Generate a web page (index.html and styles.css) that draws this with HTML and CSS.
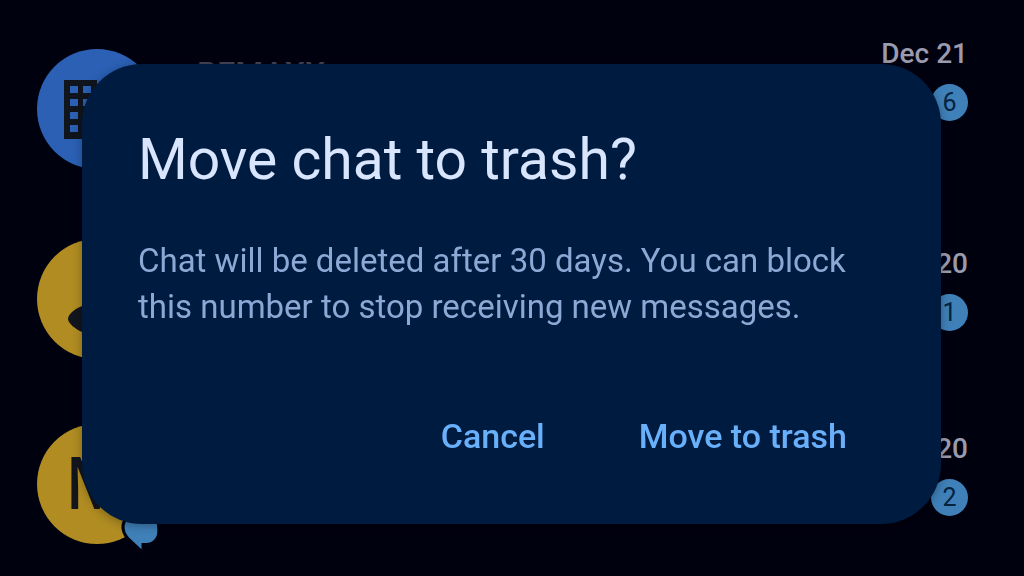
FILE: index.html
```html
<!DOCTYPE html>
<html lang="en">
<head>
  <meta charset="UTF-8" />
  <meta name="viewport" content="width=device-width, initial-scale=1.0"/>
  <title>Messages</title>
  <link rel="stylesheet" href="styles.css">
</head>
<body>
  <!-- Conversation list -->
  <ul class="chat-list">
    <li class="chat chat-tall">
      <div class="avatar avatar-blue">
        <svg viewBox="0 0 120 120" aria-hidden="true">
          <path fill="#10141c" fill-rule="evenodd" d="M27 31H60V44H93V90H27ZM33 37V44H41V37ZM46 37V44H54V37ZM33 50V57H41V50ZM46 50V57H54V50ZM33 63V70H41V63ZM46 63V70H54V63ZM33 76V83H41V76ZM46 76V83H54V76Z"/>
        </svg>
      </div>
      <div class="chat-name">BEMAXX</div>
      <div class="chat-meta">
        <time>Dec 21</time>
        <span class="count">6</span>
      </div>
    </li>
    <li class="chat">
      <div class="avatar avatar-gold">
        <svg viewBox="0 0 120 120" aria-hidden="true">
          <path fill="#12151b" d="M31 80C31 75 38 70 45 67Q60 62 75 67C82 70 89 75 89 80C89 84 82 90 75 93Q60 98 45 93C38 90 31 84 31 80Z"/>
          <circle cx="60" cy="41" r="13" fill="#12151b"/>
        </svg>
      </div>
      <div class="chat-name"></div>
      <div class="chat-meta">
        <time>Dec 20</time>
        <span class="count">1</span>
      </div>
    </li>
    <li class="chat">
      <div class="avatar avatar-gold">
        <span>M</span>
        <svg class="rcs" viewBox="0 0 40 40" aria-hidden="true">
          <path fill="#3f80b8" stroke="#02030f" stroke-width="3" d="M13 4H28A9 9 0 0 1 37 14V18A12 12 0 0 1 25 30H22V38L8 25C0 16 1 4 13 4Z"/>
        </svg>
      </div>
      <div class="chat-name"></div>
      <div class="chat-meta">
        <time>Dec 20</time>
        <span class="count">2</span>
      </div>
    </li>
  </ul>

  <!-- Confirm dialog -->
  <div class="overlay">
    <div class="dialog" role="alertdialog" aria-labelledby="dialogTitle" aria-describedby="dialogText">
      <h1 id="dialogTitle">Move chat to trash?</h1>
      <p id="dialogText">Chat will be deleted after 30 days. You can block this number to stop receiving new messages.</p>
      <div class="actions">
        <button type="button">Cancel</button>
        <button type="button">Move to trash</button>
      </div>
    </div>
  </div>
</body>
</html>
```
FILE: styles.css
```css
*{margin:0;padding:0;box-sizing:border-box;}
body{
  min-height:100vh;
  font-family:Roboto,"Noto Sans",sans-serif;
  background:#00010f;
  overflow:hidden;}

/* conversation list */
.chat-list{
  list-style:none;
  display:flex;
  flex-direction:column;
  gap:65px;
  padding:29px 56px 0 37px;}

.chat{
  display:flex;
  align-items:flex-start;
  gap:40px;}
.chat-tall{padding-bottom:5px;}
.chat-tall .avatar{margin-top:20px;}

.avatar{
  position:relative;
  flex:none;
  width:120px;
  height:120px;
  border-radius:50%;
  display:flex;
  align-items:center;
  justify-content:center;
  font-size:72px;
  color:#12151b;}
.avatar svg{width:100%;height:100%;}
.avatar-blue{background:#2b60b4;}
.avatar-gold{background:#b08c22;}
.avatar .rcs{
  position:absolute;
  right:-5px;
  bottom:-8px;
  width:42px;
  height:42px;}
.rcs{overflow:visible;}
.avatar .rcs{bottom:-11px;}

.chat-name{
  flex:1;
  padding-top:28px;
  font-size:32px;
  font-weight:500;
  line-height:32px;
  color:#44465a;}

.chat-meta{
  display:flex;
  flex-direction:column;
  align-items:flex-end;
  gap:13px;
  padding-top:8px;}
.chat-meta time{
  font-size:28px;
  font-weight:500;
  line-height:34px;
  color:#9b9bae;}

.count{
  width:37px;
  height:37px;
  border-radius:50%;
  background:#3f80b8;
  color:#04233f;
  font-size:25px;
  line-height:38px;
  text-align:center;}

/* dialog */
.overlay{
  position:fixed;
  inset:0;
  display:flex;
  align-items:center;
  padding:11px 83px 0 82px;}

.dialog{
  width:100%;
  padding:60px 56px 53px;
  border-radius:60px;
  background:#001b40;
  box-shadow:0 2px 10px rgba(0,0,0,.3);}

.dialog h1{
  margin-bottom:42px;
  font-size:57px;
  font-weight:400;
  line-height:72px;
  color:#d8e5fd;}

.dialog p{
  margin-bottom:71px;
  font-size:33px;
  line-height:46px;
  color:#8ea8d5;}

.actions{
  display:flex;
  justify-content:flex-end;
  gap:18px;}
.actions button{
  padding:8px 38px;
  border:none;
  border-radius:35px;
  background:none;
  font-family:inherit;
  font-size:34px;
  font-weight:500;
  line-height:54px;
  color:#69b0fb;
  cursor:pointer;}
```
